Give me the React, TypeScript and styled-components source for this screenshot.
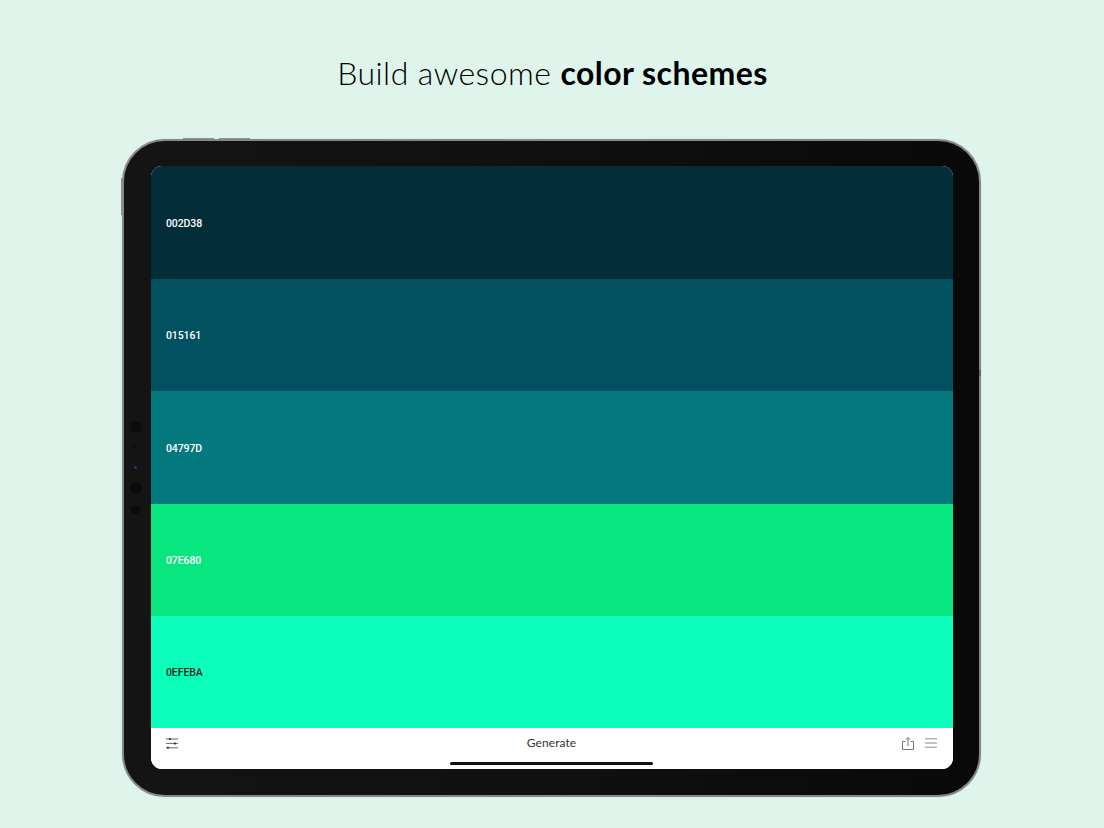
import React from 'react';
import styled, { createGlobalStyle } from 'styled-components';

const GlobalStyle = createGlobalStyle`
  html, body {
    margin: 0;
    padding: 0;
    background: #dff5ec;
  }
`;

const Page = styled.div`
  width: 1104px;
  height: 828px;
  overflow: hidden;
  background: #dff5ec;
  padding-top: 52px;
  box-sizing: border-box;
`;

const Headline = styled.h1`
  margin: 0 0 45px;
  height: 42px;
  line-height: 42px;
  text-align: center;
  font-family: 'Lato', 'Liberation Sans', sans-serif;
  font-size: 32px;
  font-weight: 300;
  color: #000;
  letter-spacing: 0.45px;
  padding-left: 1px;

  strong {
    font-weight: 700;
  }
`;

const Tablet = styled.div`
  position: relative;
  box-sizing: border-box;
  width: 859px;
  height: 658px;
  margin-left: 122px;
  padding: 25.4px 26px 26px 26.5px;
  border: 2px solid #85878a;
  border-radius: 43px;
  background: linear-gradient(90deg, #141414 0%, #101010 50%, #090909 100%);
  box-shadow: 0 0 1px #a5a7aa;
`;

const TopButtons = styled.div`
  position: absolute;
  top: -3px;
  left: 59px;
  display: flex;
  gap: 5px;
`;

const TopButton = styled.span`
  width: 31px;
  height: 1px;
  background: #8b8d90;
`;

const PowerButton = styled.span`
  position: absolute;
  left: -3px;
  top: 37px;
  width: 1.5px;
  height: 37px;
  background: #8b8d90;
`;

const SideNotch = styled.span`
  position: absolute;
  right: -2px;
  top: 229px;
  width: 2px;
  height: 6px;
  background: #66686b;
`;

const CameraRail = styled.div`
  position: absolute;
  left: 0;
  top: 275.4px;
  width: 23px;
  display: grid;
  grid-auto-rows: 20.6px;
  justify-items: center;
  align-items: center;
`;

const CameraDot = styled.span<{ $size: number; $color?: string }>`
  width: ${p => p.$size}px;
  height: ${p => p.$size}px;
  border-radius: 50%;
  background: ${p => p.$color || '#0b0b0b'};
`;

const Screen = styled.div`
  display: flex;
  flex-direction: column;
  height: 602.6px;
  border-radius: 11px;
  overflow: hidden;
  background: #fff;
`;

const Swatch = styled.div<{ $bg: string; $fg: string }>`
  flex: 0 0 112.4px;
  box-sizing: border-box;
  display: flex;
  align-items: center;
  padding: 1.5px 0 0 15.5px;
  background: ${p => p.$bg};
  color: ${p => p.$fg};
  font-family: 'Roboto', 'Liberation Sans', sans-serif;
  font-size: 10.5px;
  font-weight: 500;
  letter-spacing: -0.1px;
`;

const Toolbar = styled.div`
  flex: 1;
  display: flex;
  flex-direction: column;
  align-items: center;
  background: #fff;
`;

const ToolbarRow = styled.div`
  align-self: stretch;
  display: grid;
  grid-template-columns: 1fr auto 1fr;
  align-items: center;
  height: 16px;
  margin-top: 7px;
  padding: 0 16px 0 15.5px;
`;

const GenerateLabel = styled.span`
  font-family: 'Lato', 'Liberation Sans', sans-serif;
  font-size: 12px;
  line-height: 15px;
  color: #333;
  letter-spacing: 0.1px;
  margin-top: -1px;
`;

const IconGroup = styled.div`
  display: flex;
  align-items: center;
  justify-content: flex-end;
  gap: 11px;
`;

const HomeBar = styled.span`
  margin-top: auto;
  margin-bottom: 4px;
  width: 203px;
  height: 3px;
  border-radius: 2px;
  background: #111;
`;

const swatches = [
  { hex: '002D38', bg: '#022d39', fg: '#fff' },
  { hex: '015161', bg: '#025161', fg: '#fff' },
  { hex: '04797D', bg: '#04797d', fg: '#fff' },
  { hex: '07E680', bg: '#07e67f', fg: '#fff' },
  { hex: '0EFEBA', bg: '#0cffba', fg: '#102a20' },
];

const SlidersIcon = () => (
  <svg width="12" height="11" viewBox="0 0 12 11" fill="none" stroke="#666" strokeWidth="1">
    <path d="M0 1h12M0 5.4h12M0 9.8h12" />
    <path d="M4 0v2M9 4.4v2M2 8.8v2" strokeWidth="1.5" stroke="#222" />
  </svg>
);

const ShareIcon = () => (
  <svg width="12" height="13" viewBox="0 0 12 13" fill="none" stroke="#777" strokeWidth="1">
    <path d="M3.5 4.5H.5v8h11v-8h-3" />
    <path d="M6 9V.8M4 2.6 6 .7l2 1.9" />
  </svg>
);

const MenuIcon = () => (
  <svg width="12" height="10" viewBox="0 0 12 10" fill="none" stroke="#8a8a8a" strokeWidth="1">
    <path d="M0 .8h12M0 5h12M0 9.2h12" />
  </svg>
);

const App: React.FC = () => {
  return (
    <Page>
      <GlobalStyle />
      <Headline>
        Build awesome <strong>color schemes</strong>
      </Headline>
      <Tablet>
        <TopButtons>
          <TopButton />
          <TopButton />
        </TopButtons>
        <PowerButton />
        <SideNotch />
        <CameraRail>
          <CameraDot $size={12} />
          <CameraDot $size={3} />
          <CameraDot $size={3} $color="#1d3f78" />
          <CameraDot $size={12} />
          <CameraDot $size={9} />
        </CameraRail>
        <Screen>
          {swatches.map(s => (
            <Swatch key={s.hex} $bg={s.bg} $fg={s.fg}>
              {s.hex}
            </Swatch>
          ))}
          <Toolbar>
            <ToolbarRow>
              <SlidersIcon />
              <GenerateLabel>Generate</GenerateLabel>
              <IconGroup>
                <ShareIcon />
                <MenuIcon />
              </IconGroup>
            </ToolbarRow>
            <HomeBar />
          </Toolbar>
        </Screen>
      </Tablet>
    </Page>
  );
};

export default App;
